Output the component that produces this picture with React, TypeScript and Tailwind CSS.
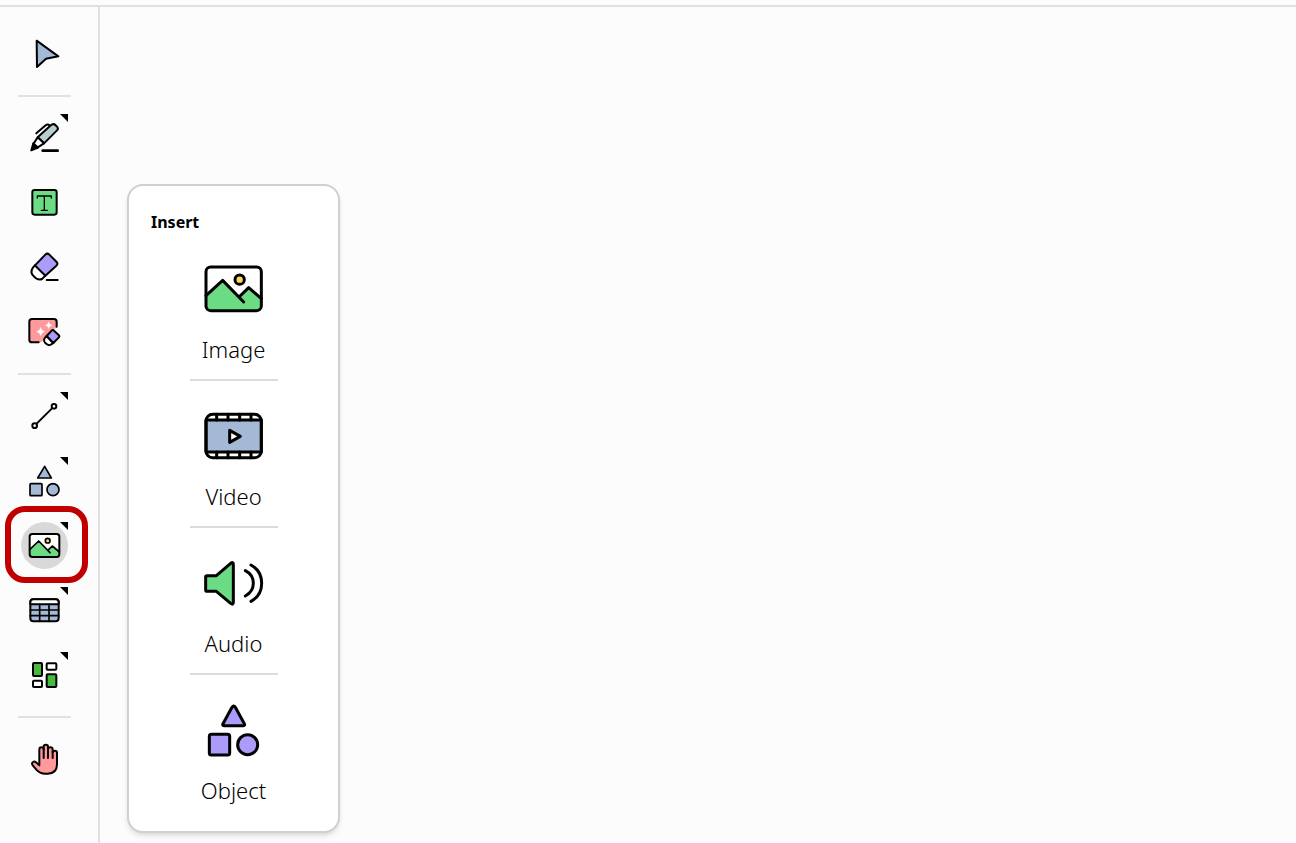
import type { ReactNode } from "react";
import clsx from "clsx";

type Tool = {
  label: string;
  icon: ReactNode;
  menu?: boolean;
  active?: boolean;
};

const selectTool: Tool = {
  label: "Select",
  icon: <path d="M47 29 L112 76 L75 83 L48 108 Z" fill="#a3b9d6" />,
};

const drawingTools: Tool[] = [
  {
    label: "Pen",
    menu: true,
    icon: (
      <>
        <path d="M46 58 L74 34 Q80 29 87 35" fill="none" />
        <path d="M50 70 L88 35 Q97 27 103 33 L109 39 Q113 44 108 49 L69 88 Z" fill="#b5d0cf" />
        <path d="M50 70 L69 88 L49 101 L37 90 Z" fill="#fff" />
        <path d="M37 88 L51 101 L31 109 Z" fill="#000" />
        <path d="M65 110 H110" strokeWidth="8" />
      </>
    ),
  },
  {
    label: "Text",
    icon: (
      <>
        <rect x="34" y="33" width="73" height="74" rx="7" fill="#6bdb84" />
        <path d="M49 57 V51 H91 V57 M70 51 V94 M61 94 H79" fill="none" strokeWidth="4" />
      </>
    ),
  },
  {
    label: "Eraser",
    icon: (
      <>
        <path d="M42 64 Q26 79 34 92 Q50 112 63 105 L73 95 Z" fill="#fff" />
        <path d="M42 64 L73 32 Q79 26 85 32 L107 54 Q112 60 106 65 L73 95 Z" fill="#ac9bf8" />
        <path d="M77 108 H110" />
      </>
    ),
  },
  {
    label: "Magic eraser",
    icon: (
      <>
        <path d="M107 54 V30 H25 V100 H60 Z" fill="#ff9a9c" stroke="none" />
        <path d="M107 53 V38 Q107 30 99 30 H33 Q25 30 25 38 V92 Q25 100 33 100 H53" fill="none" />
        <path
          d="M59 56 L63 64 L71 68 L63 72 L59 80 L55 72 L47 68 L55 64 Z M83 39 L86 46 L93 49 L86 52 L83 59 L80 52 L73 49 L80 46 Z"
          fill="#fff"
          stroke="#fff"
          strokeWidth="1"
        />
        <path d="M77 81 Q64 92 72 101 Q82 113 91 106 L97 102 Z" fill="#fff" />
        <path d="M77 81 L92 65 Q95 61 99 65 L113 78 Q117 82 113 86 L97 102 Z" fill="#ac9bf8" />
      </>
    ),
  },
];

const insertTools: Tool[] = [
  {
    label: "Line",
    menu: true,
    icon: (
      <>
        <path d="M41 101 L99 43" />
        <circle cx="99" cy="43" r="7" fill="#fff" />
        <circle cx="41" cy="101" r="7" fill="#fff" />
      </>
    ),
  },
  {
    label: "Shapes",
    menu: true,
    icon: (
      <g fill="#a3b9d6" strokeWidth="5">
        <path d="M71 28 L91 63 H50 Z" />
        <rect x="27" y="80" width="36" height="36" rx="3" />
        <circle cx="96" cy="98" r="18" />
      </g>
    ),
  },
  {
    label: "Insert",
    menu: true,
    active: true,
    icon: (
      <>
        <rect x="26" y="36" width="89" height="69" rx="8" fill="#fff" stroke="none" />
        <path
          d="M26 83 L53 57 L80 85 L94 72 L115 90 V97 Q115 105 107 105 H34 Q26 105 26 97 Z"
          fill="#6bdb84"
          stroke="none"
        />
        <path d="M26 83 L53 57 L87 92 M80 85 L94 72 L115 90" fill="none" strokeWidth="5" />
        <circle cx="80" cy="56" r="7" fill="#ffd75e" strokeWidth="5" />
        <rect x="26" y="36" width="89" height="69" rx="8" fill="none" />
      </>
    ),
  },
  {
    label: "Table",
    menu: true,
    icon: (
      <>
        <rect x="28" y="37" width="85" height="66" rx="9" fill="#a3b9d6" />
        <path d="M28 52 V46 Q28 37 37 37 H104 Q113 37 113 46 V52 Z" fill="#fff" />
        <path d="M28 69 H113 M28 86 H113 M56 52 V103 M84 52 V103" strokeWidth="5" />
      </>
    ),
  },
  {
    label: "Widgets",
    menu: true,
    icon: (
      <>
        <rect x="36" y="33" width="27" height="39" rx="3" fill="#47ba3b" />
        <rect x="77" y="34" width="29" height="19" rx="3" fill="#fff" />
        <rect x="36" y="86" width="27" height="19" rx="3" fill="#fff" />
        <rect x="77" y="67" width="29" height="38" rx="3" fill="#47ba3b" />
      </>
    ),
  },
];

const panTool: Tool = {
  label: "Pan",
  icon: (
    <>
      <path
        d="M55 91 V44 Q55 37 61 37 Q68 37 68 43 V35 Q68 29 75 29 Q81 29 81 35 V42 Q82 37 88 37 Q95 37 95 44 V52 Q96 47 102 47 Q108 47 108 53 V88 Q108 116 80 116 H72 Q58 116 48 106 L35 91 Q31 84 36 81 Q40 78 45 82 Z"
        fill="#ff9a9c"
      />
      <path d="M68 42 V69 M81 40 V69 M95 50 V69" />
    </>
  ),
};

const insertItems: { label: string; icon: ReactNode }[] = [
  {
    label: "Image",
    icon: (
      <>
        <path
          d="M12 116 L62 70 L111 120 L140 92 L178 125 V147 Q178 161 164 161 H26 Q12 161 12 147 Z"
          fill="#6bdb84"
          stroke="none"
        />
        <path d="M12 116 L62 70 L125 135 M111 120 L140 92 L178 125" fill="none" />
        <circle cx="113" cy="68" r="14" fill="#ffd75e" />
        <rect x="12" y="30" width="166" height="131" rx="14" fill="none" />
      </>
    ),
  },
  {
    label: "Video",
    icon: (
      <>
        <path d="M12 48 H178 V144 H12 Z" fill="#a3b9d6" />
        <rect x="12" y="31" width="166" height="130" rx="20" fill="none" />
        <path d="M44 31 V48 M78 31 V48 M113 31 V48 M147 31 V48 M44 144 V161 M78 144 V161 M113 144 V161 M147 144 V161" />
        <path d="M83 79 L115 97 L83 115 Z" fill="#fff" />
      </>
    ),
  },
  {
    label: "Audio",
    icon: (
      <>
        <path
          d="M11 78 Q11 74 15 74 H43 L86 37 Q94 31 94 40 V154 Q94 163 86 157 L43 121 H15 Q11 121 11 117 Z"
          fill="#6bdb84"
        />
        <path d="M130 59 Q154 71 154 97 Q154 122 130 135 M147 42 Q179 60 179 97 Q179 134 147 151" fill="none" />
      </>
    ),
  },
  {
    label: "Object",
    icon: (
      <g fill="#ac9bf8">
        <path d="M90 28 Q95 20 100 28 L127 77 Q130 83 124 83 H66 Q60 83 63 77 Z" />
        <rect x="22" y="109" width="61" height="62" rx="6" />
        <circle cx="137" cy="140" r="30" />
      </g>
    ),
  },
];

function ToolButton({ label, icon, menu, active }: Tool) {
  return (
    <button
      type="button"
      aria-label={label}
      aria-pressed={active}
      className={clsx("relative size-[47px] rounded-full", active ? "bg-[#d9d9d9]" : "hover:bg-gray-100")}
    >
      <svg
        viewBox="0 0 141 141"
        className="size-full"
        stroke="#000"
        strokeWidth="6"
        strokeLinejoin="round"
        strokeLinecap="round"
      >
        {icon}
      </svg>
      {menu && (
        <svg viewBox="0 0 8 8" className="absolute top-0 right-0 size-2">
          <path d="M0 0 H8 V8 Z" />
        </svg>
      )}
      {active && (
        <span className="absolute -top-4 -left-4 -right-5 -bottom-3.5 rounded-[20px] border-6 border-[#c00000]" />
      )}
    </button>
  );
}

function Divider() {
  return <hr className="my-[17px] w-full border-t-2 border-[#e1e1e1]" />;
}

function ToolGroup({ tools }: { tools: Tool[] }) {
  return (
    <div className="flex flex-col gap-[18px]">
      {tools.map((tool) => (
        <ToolButton key={tool.label} {...tool} />
      ))}
    </div>
  );
}

export default function App() {
  return (
    <div className="flex min-h-screen flex-col bg-[#fcfcfc] pt-[5px] font-['Noto_Sans',sans-serif] text-black">
      <div className="flex flex-1 border-t-2 border-[#e1e1e1]">
        {/* Toolbar */}
        <aside className="border-r-2 border-[#e1e1e1] pt-6 pr-[27px] pl-[18px]">
          <nav aria-label="Tools" className="flex w-[53px] flex-col items-center">
            <ToolGroup tools={[selectTool]} />
            <Divider />
            <ToolGroup tools={drawingTools} />
            <Divider />
            <ToolGroup tools={insertTools} />
            <Divider />
            <ToolGroup tools={[panTool]} />
          </nav>
        </aside>

        {/* Canvas with the insert menu open */}
        <main className="flex-1 pt-[177px] pl-[27px]">
          <section className="w-[213px] rounded-2xl border-2 border-[#d0d0d0] bg-white pt-[26px] pb-[27px] shadow-md">
            <h2 className="px-[22px] text-base leading-5 font-bold">Insert</h2>
            <ul className="mt-[25px] flex flex-col items-center">
              {insertItems.map((item, i) => (
                <li key={item.label} className={clsx("w-[88px]", i > 0 && "mt-4 border-t-2 border-[#dcdcdc] pt-[23px]")}>
                  <button type="button" className="flex w-full flex-col items-center gap-3.5">
                    <svg
                      viewBox="0 0 192 192"
                      className="size-16"
                      stroke="#000"
                      strokeWidth="9"
                      strokeLinejoin="round"
                      strokeLinecap="round"
                    >
                      {item.icon}
                    </svg>
                    <span className="text-[22px] leading-7 font-light">{item.label}</span>
                  </button>
                </li>
              ))}
            </ul>
          </section>
        </main>
      </div>
    </div>
  );
}
